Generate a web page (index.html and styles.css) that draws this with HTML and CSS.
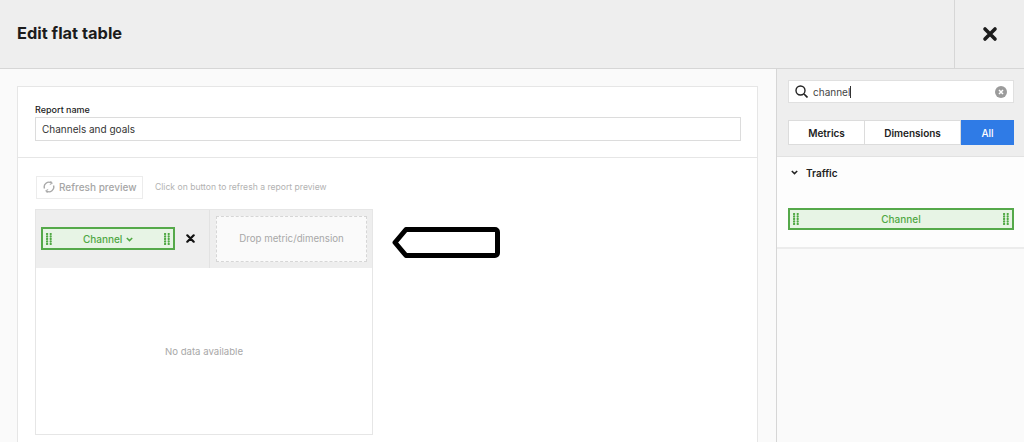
FILE: index.html
```html
<!DOCTYPE html>
<html lang="en">
<head>
    <meta charset="UTF-8">
    <title>Edit flat table</title>
    <link rel="stylesheet" href="styles.css">
</head>
<body>
<!-- drag handle, used by both chips -->
<svg class="defs" width="0" height="0">
    <symbol id="grip-dots" viewBox="0 0 6 12">
        <g fill="#4fa843">
            <circle cx="1.100" cy="1" r="1.150"/><circle cx="4.700" cy="1" r="1.150"/>
            <circle cx="1.100" cy="3.500" r="1.150"/><circle cx="4.700" cy="3.500" r="1.150"/>
            <circle cx="1.100" cy="6" r="1.150"/><circle cx="4.700" cy="6" r="1.150"/>
            <circle cx="1.100" cy="8.500" r="1.150"/><circle cx="4.700" cy="8.500" r="1.150"/>
            <circle cx="1.100" cy="11" r="1.150"/><circle cx="4.700" cy="11" r="1.150"/>
        </g>
    </symbol>
</svg>
<header class="top-bar">
    <h1>Edit flat table</h1>
    <div class="close-cell">
        <svg width="16" height="16" viewBox="0 0 16 16"><path d="M3 3l10 10M13 3L3 13" stroke="#1c1c1c" stroke-width="3.600" stroke-linecap="round"/></svg>
    </div>
</header>
<div class="main">
    <section class="editor">
        <div class="card">
            <div class="name-block">
                <label class="name-label">Report name</label>
                <div class="name-input">Channels and goals</div>
            </div>
            <div class="preview-block">
                <div class="refresh-row">
                    <div class="refresh-btn">
                        <svg width="12" height="12" viewBox="0 0 12 12" fill="none" stroke="#a8a8a8" stroke-width="1.400"><path d="M1.500 7.500A4.700 4.700 0 0 1 8.500 2"/><path d="M10.500 4.500A4.700 4.700 0 0 1 3.500 10"/><path d="M7.500 0l1.800 2.300-2.500 1.200M4.500 12l-1.800-2.300 2.500-1.200" stroke-width="1"/></svg>
                        Refresh preview
                    </div>
                    <span class="refresh-hint">Click on button to refresh a report preview</span>
                </div>
                <div class="table-box">
                    <div class="table-head">
                        <div class="head-cell">
                            <div class="chip chip-small">
                                <svg class="grip" width="6" height="12"><use href="#grip-dots"/></svg>
                                <span class="chip-text">Channel
                                    <svg width="7" height="5" viewBox="0 0 7 5" fill="none" stroke="#4fa843" stroke-width="1.500"><path d="M.8 1l2.700 2.600L6.200 1"/></svg>
                                </span>
                                <svg class="grip" width="6" height="12"><use href="#grip-dots"/></svg>
                            </div>
                            <svg class="chip-remove" width="9" height="9" viewBox="0 0 9 9"><path d="M1.300 1.300l6.400 6.400M7.700 1.300l-6.400 6.400" stroke="#111" stroke-width="2.200" stroke-linecap="round"/></svg>
                        </div>
                        <div class="drop-cell">
                            <div class="drop-zone">Drop metric/dimension</div>
                        </div>
                    </div>
                    <div class="table-empty">No data available</div>
                </div>
            </div>
            <svg class="arrow" width="112" height="36" viewBox="0 0 112 36" fill="none">
                <path d="M16 4.500H105a2.500 2.500 0 0 1 2.500 2.500V28a2.500 2.500 0 0 1-2.500 2.500H16L5 17.500z" fill="#fff" stroke="#000" stroke-width="5" stroke-linejoin="round"/>
            </svg>
        </div>
    </section>
    <aside class="sidebar">
        <div class="side-top">
            <div class="search">
                <svg width="13" height="13" viewBox="0 0 13 13" fill="none" stroke="#222" stroke-width="1.400"><circle cx="5.500" cy="5.500" r="4.500"/><path d="M9 9l3.500 3.500" stroke-width="1.700"/></svg>
                <span class="search-text">channel</span><span class="caret"></span>
                <svg class="search-clear" width="12" height="12" viewBox="0 0 12 12"><circle cx="6" cy="6" r="6" fill="#9b9b9b"/><path d="M4 4l4 4M8 4l-4 4" stroke="#fff" stroke-width="1.500"/></svg>
            </div>
            <div class="tabs">
                <div class="tab tab-metrics">Metrics</div>
                <div class="tab tab-dims">Dimensions</div>
                <div class="tab tab-all">All</div>
            </div>
        </div>
        <div class="group">
            <div class="group-title">
                <svg width="7" height="5" viewBox="0 0 7 5" fill="none" stroke="#222" stroke-width="1.500"><path d="M.8 1l2.700 2.600L6.200 1"/></svg>
                Traffic
            </div>
            <div class="chip chip-wide">
                <svg class="grip" width="6" height="12"><use href="#grip-dots"/></svg>
                <span class="chip-text">Channel</span>
                <svg class="grip" width="6" height="12"><use href="#grip-dots"/></svg>
            </div>
        </div>
    </aside>
</div>
</body>
</html>
```

FILE: styles.css
```css
* {
    box-sizing: border-box;
}

html, body {
    height: 442px;
    overflow: hidden;
}

body {
    margin: 0;
    background-color: #fafafa;
    font-family: "Inter", "Liberation Sans", sans-serif;
    color: #222;
}

.defs {
    display: block;
}

.top-bar {
    display: flex;
    justify-content: space-between;
    height: 69px;
    background-color: #eeeeee;
    border-bottom: 1px solid #d6d6d6;
}

.top-bar h1 {
    margin: 0;
    padding-left: 17px;
    font-size: 16.400px;
    font-weight: 700;
    line-height: 67px;
    color: #1c1c1c;
}

.close-cell {
    display: flex;
    align-items: center;
    justify-content: center;
    width: 70px;
    border-left: 1px solid #d6d6d6;
}

.main {
    display: flex;
    height: 373px;
    overflow: hidden;
}

.editor {
    width: 776px;
    height: 373px;
    overflow: hidden;
    padding: 17px 18px 0 17px;
}

.card {
    position: relative;
    height: 400px;
    background-color: #fff;
    border: 1px solid #e6e6e6;
}

.name-block {
    height: 71px;
    padding: 17px 16px 0 17px;
    border-bottom: 1px solid #e6e6e6;
}

.name-label {
    display: block;
    font-size: 9px;
    font-weight: 500;
    line-height: 12px;
    margin-bottom: 1px;
}

.name-input {
    height: 24px;
    padding-left: 6px;
    border: 1px solid #dcdcdc;
    font-size: 10px;
    line-height: 22px;
    color: #333;
    background-color: #fff;
}

.preview-block {
    padding: 17px 17px 0;
}

.refresh-row {
    display: flex;
    align-items: center;
    height: 24px;
    margin-left: 1px;
    margin-bottom: 10px;
}

.refresh-btn {
    display: flex;
    align-items: center;
    gap: 4px;
    width: 107px;
    height: 23px;
    padding-left: 6px;
    border: 1px solid #ececec;
    font-size: 10px;
    font-weight: 500;
    color: #a6a6a6;
}

.refresh-hint {
    margin-left: 12px;
    font-size: 8.600px;
    color: #b2b2b2;
}

.table-box {
    width: 338px;
    height: 226px;
    border: 1px solid #e6e6e6;
}

.table-head {
    display: flex;
    height: 58px;
    background-color: #eeeeee;
}

.head-cell {
    display: flex;
    flex: none;
    align-items: center;
    width: 174px;
    padding: 0 0 1px 5px;
    border-right: 1px solid #e2e2e2;
}

.chip {
    display: flex;
    align-items: center;
    justify-content: space-between;
    background-color: #e7f4e5;
    border: 2px solid #55a94a;
    color: #4fa843;
    font-size: 10px;
    font-weight: 500;
}

.chip-small {
    width: 134px;
    height: 23px;
    padding: 0 3px;
}

.chip-wide {
    width: 226px;
    height: 22px;
    margin: 27px 0 0 11px;
    padding: 0 3px;
}

.chip-text svg {
    margin-left: 1px;
    vertical-align: 1px;
}

.grip {
    flex: none;
}

.chip-remove {
    margin-left: 11px;
}

.drop-cell {
    flex: 1;
    padding: 6px 0 0 6px;
}

.drop-zone {
    display: flex;
    align-items: center;
    justify-content: center;
    height: 46px;
    width: 151px;
    padding-bottom: 1px;
    background-color: #fafafa;
    border: 1px dashed #d6d6d6;
    font-size: 9.700px;
    color: #a8a8a8;
}

.table-empty {
    height: 166px;
    display: flex;
    align-items: center;
    justify-content: center;
    font-size: 9.600px;
    color: #a8a8a8;
}

.arrow {
    position: absolute;
    left: 372px;
    top: 138px;
}

.sidebar {
    width: 248px;
    border-left: 1px solid #d6d6d6;
}

.side-top {
    height: 88px;
    padding: 11px 10px 0 11px;
    background-color: #eeeeee;
    border-bottom: 1px solid #e2e2e2;
}

.search {
    display: flex;
    align-items: center;
    height: 23px;
    padding: 0 6px;
    background-color: #fff;
    border: 1px solid #e0e0e0;
}

.search-text {
    margin-left: 5px;
    font-size: 10px;
    color: #444;
}

.caret {
    width: 1px;
    height: 12px;
    background-color: #333;
}

.search-clear {
    margin-left: auto;
}

.tabs {
    display: flex;
    height: 25px;
    margin-top: 17px;
}

.tab {
    display: flex;
    align-items: center;
    justify-content: center;
    background-color: #fff;
    border: 1px solid #dcdcdc;
    font-size: 10px;
    font-weight: 600;
    color: #222;
}

.tab-metrics {
    width: 77px;
}

.tab-dims {
    width: 96px;
    border-left: 0;
}

.tab-all {
    width: 53px;
    background-color: #2f7be6;
    border-color: #2f7be6;
    color: #fff;
    font-weight: 500;
}

.group {
    height: 92px;
    background-color: #fdfdfd;
    border-bottom: 2px solid #ececec;
}

.group-title {
    display: flex;
    align-items: center;
    gap: 8px;
    padding: 7px 0 0 14px;
    height: 24px;
    font-size: 10px;
    font-weight: 600;
    color: #222;
}
```
